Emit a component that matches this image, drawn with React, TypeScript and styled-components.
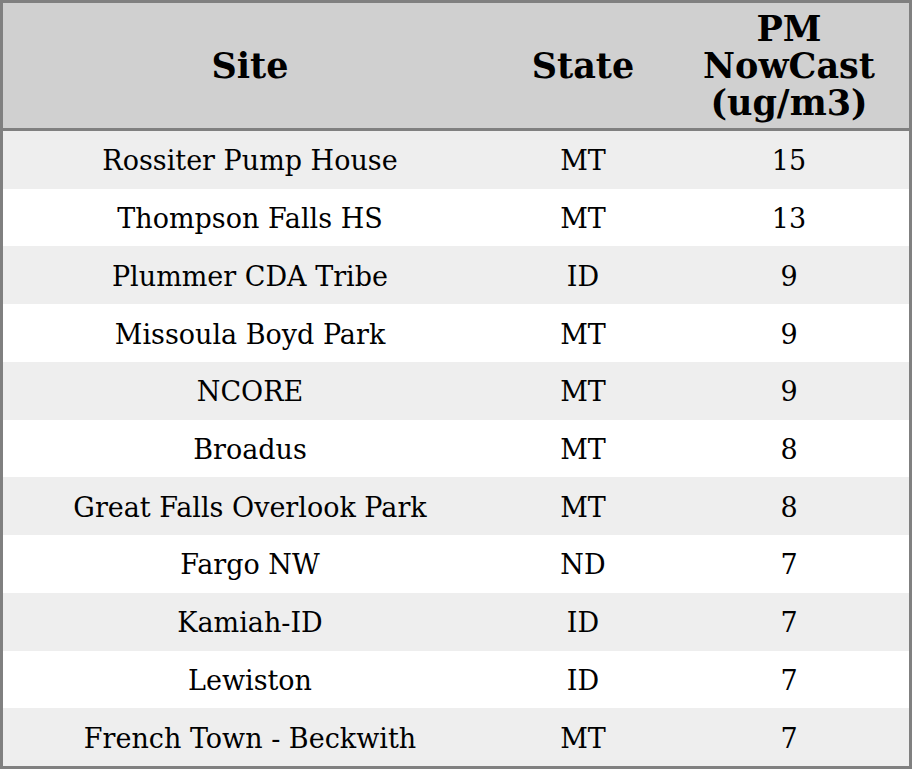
import styled, {createGlobalStyle} from 'styled-components'

const GlobalStyle = createGlobalStyle`
  html, body {
    margin: 0;
    padding: 0;
    background: #ffffff;
  }
  body {
    font-family: 'DejaVu Serif', serif;
    color: #000000;
  }
`

const Table = styled.div`
  box-sizing: border-box;
  width: 912px;
  height: 769px;
  border: 3px solid #808080;
  display: grid;
  grid-template-columns: 494px 172px 240px;
  grid-template-rows: 128px repeat(11, 1fr);
`

const Row = styled.div<{$shade: string}>`
  display: contents;
  & > div {
    background: ${(p) => p.$shade};
  }
`

const HeadCell = styled.div`
  box-sizing: border-box;
  display: flex;
  align-items: center;
  justify-content: center;
  text-align: center;
  background: #d0d0d0;
  border-bottom: 3px solid #808080;
  font-size: 35px;
  font-weight: bold;
  line-height: 37px;
`

const Cell = styled.div`
  display: flex;
  align-items: center;
  justify-content: center;
  font-size: 27px;
  padding-top: 2px;
`

type Reading = {
  site: string
  state: string
  pm: number
}

const readings: Reading[] = [
  {site: 'Rossiter Pump House', state: 'MT', pm: 15},
  {site: 'Thompson Falls HS', state: 'MT', pm: 13},
  {site: 'Plummer CDA Tribe', state: 'ID', pm: 9},
  {site: 'Missoula Boyd Park', state: 'MT', pm: 9},
  {site: 'NCORE', state: 'MT', pm: 9},
  {site: 'Broadus', state: 'MT', pm: 8},
  {site: 'Great Falls Overlook Park', state: 'MT', pm: 8},
  {site: 'Fargo NW', state: 'ND', pm: 7},
  {site: 'Kamiah-ID', state: 'ID', pm: 7},
  {site: 'Lewiston', state: 'ID', pm: 7},
  {site: 'French Town - Beckwith', state: 'MT', pm: 7},
]

const App = () => (
  <>
    <GlobalStyle />
    <Table>
      <HeadCell>Site</HeadCell>
      <HeadCell>State</HeadCell>
      <HeadCell>
        PM
        <br />
        NowCast
        <br />
        (ug/m3)
      </HeadCell>
      {readings.map((r, i) => (
        <Row key={r.site} $shade={i % 2 === 0 ? '#eeeeee' : '#ffffff'}>
          <Cell>{r.site}</Cell>
          <Cell>{r.state}</Cell>
          <Cell>{r.pm}</Cell>
        </Row>
      ))}
    </Table>
  </>
)

App.displayName = 'App'
export default App
